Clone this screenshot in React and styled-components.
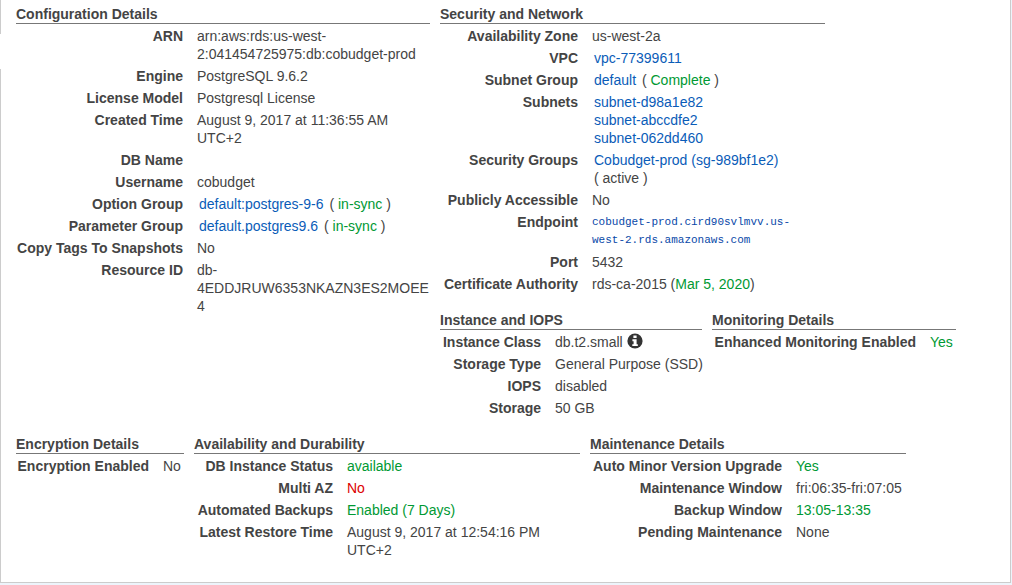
import React from "react";
import styled, { createGlobalStyle } from "styled-components";

const GlobalStyle = createGlobalStyle`
  * { box-sizing: border-box; }
  body {
    margin: 0;
    background: #edf4fb;
    color: #444;
    font: 14px/18px "Liberation Sans", Arial, sans-serif;
  }
`;

const Panel = styled.main`
  position: relative;
  margin-right: 1px;
  padding: 5px 15px 21px;
  background: #fff;
  border: 1px solid #ccc;
  border-top: 0;
`;

const TabNotch = styled.div`
  position: absolute;
  left: -1px;
  top: 34px;
  width: 1px;
  height: 35px;
  background: #fff;
`;

const Stack = styled.div`
  display: flex;
  flex-direction: column;
  gap: 16px;
`;

const Row = styled.div`
  display: flex;
  align-items: flex-start;
  gap: 10px;
`;

const Section = styled.section`
  flex: 0 1 ${(p) => p.$width}px;
  min-width: 0;
`;

const NetworkSlot = styled.div`
  display: flex;
`;

const Title = styled.h2`
  margin: 0 0 1px;
  font-size: 14px;
  line-height: 18px;
  font-weight: bold;
  border-bottom: 1px solid #777;
`;

const Table = styled.table`
  width: 100%;
  table-layout: fixed;
  border-collapse: collapse;
`;

const LabelCol = styled.col`
  width: ${(p) => p.$width}px;
`;

const Label = styled.th`
  padding: 2px 0;
  text-align: right;
  vertical-align: top;
  white-space: nowrap;
`;

const Value = styled.td`
  padding: 2px 0 2px 14px;
  vertical-align: top;
  overflow-wrap: anywhere;
  color: ${(p) => p.$color || "inherit"};
`;

const Link = styled.a`
  margin: 0 2px;
  color: #0a5cb8;
  text-decoration: none;
`;

const Line = styled.div`
  white-space: nowrap;
`;

const Status = styled.span`
  margin: 0 2px;
`;

const Good = styled.span`
  color: #093;
`;

const Endpoint = styled.div`
  font-family: "Liberation Mono", monospace;
  font-size: 11px;
  line-height: 18px;
  color: #0848a8;
`;

const InfoIcon = styled.svg`
  width: 16px;
  height: 16px;
  margin-left: 4px;
  vertical-align: -2px;
`;

const GREEN = "#093";
const RED = "#d00";

function Details({ title, width, labelWidth, rows }) {
  return (
    <Section $width={width}>
      <Title>{title}</Title>
      <Table>
        <colgroup>
          <LabelCol $width={labelWidth} />
          <col />
        </colgroup>
        <tbody>
          {rows.map(([label, value, color]) => (
            <tr key={label}>
              <Label scope="row">{label}</Label>
              <Value $color={color}>{value}</Value>
            </tr>
          ))}
        </tbody>
      </Table>
    </Section>
  );
}

const Info = () => (
  <InfoIcon viewBox="0 0 16 16" role="img" aria-label="Instance class information">
    <circle cx="8" cy="8" r="7.6" fill="#333" />
    <path d="M6.4 2.6h3.2v2.5H6.4zM5.4 6.3h4.2v4.9h1.2v1.9H5.3v-1.9h1.3V8.2H5.4z" fill="#fff" />
  </InfoIcon>
);

const GroupLink = ({ name, status }) => (
  <>
    <Link href="#">{name}</Link> ( <Good>{status}</Good> )
  </>
);

const configuration = [
  ["ARN", "arn:aws:rds:us-west-2:041454725975:db:cobudget-prod"],
  ["Engine", "PostgreSQL 9.6.2"],
  ["License Model", "Postgresql License"],
  ["Created Time", "August 9, 2017 at 11:36:55 AM UTC+2"],
  ["DB Name", ""],
  ["Username", "cobudget"],
  ["Option Group", <GroupLink name="default:postgres-9-6" status="in-sync" />],
  ["Parameter Group", <GroupLink name="default.postgres9.6" status="in-sync" />],
  ["Copy Tags To Snapshots", "No"],
  ["Resource ID", "db-4EDDJRUW6353NKAZN3ES2MOEE4"],
];

const network = [
  ["Availability Zone", "us-west-2a"],
  ["VPC", <Link href="#">vpc-77399611</Link>],
  ["Subnet Group", <GroupLink name="default" status="Complete" />],
  [
    "Subnets",
    ["subnet-d98a1e82", "subnet-abccdfe2", "subnet-062dd460"].map((id) => (
      <Line key={id}>
        <Link href="#">{id}</Link>
      </Line>
    )),
  ],
  [
    "Security Groups",
    <>
      <Line>
        <Link href="#">Cobudget-prod (sg-989bf1e2)</Link>
      </Line>
      <Line>
        <Status>( active )</Status>
      </Line>
    </>,
  ],
  ["Publicly Accessible", "No"],
  [
    "Endpoint",
    <Endpoint>
      <Line>cobudget-prod.cird90svlmvv.us-</Line>
      <Line>west-2.rds.amazonaws.com</Line>
    </Endpoint>,
  ],
  ["Port", "5432"],
  [
    "Certificate Authority",
    <>
      rds-ca-2015 (<Good>Mar 5, 2020</Good>)
    </>,
  ],
];

const instance = [
  [
    "Instance Class",
    <Line>
      db.t2.small
      <Info />
    </Line>,
  ],
  ["Storage Type", <Line>General Purpose (SSD)</Line>],
  ["IOPS", "disabled"],
  ["Storage", "50 GB"],
];

const monitoring = [["Enhanced Monitoring Enabled", "Yes", GREEN]];

const encryption = [["Encryption Enabled", "No"]];

const availability = [
  ["DB Instance Status", "available", GREEN],
  ["Multi AZ", "No", RED],
  ["Automated Backups", "Enabled (7 Days)", GREEN],
  ["Latest Restore Time", "August 9, 2017 at 12:54:16 PM UTC+2"],
];

const maintenance = [
  ["Auto Minor Version Upgrade", "Yes", GREEN],
  ["Maintenance Window", "fri:06:35-fri:07:05"],
  ["Backup Window", "13:05-13:35", GREEN],
  ["Pending Maintenance", "None"],
];

export default function App() {
  return (
    <>
      <GlobalStyle />
      <Panel>
        <TabNotch />
        <Stack>
          <Row>
            <Details title="Configuration Details" width={414} labelWidth={167} rows={configuration} />
            <Stack>
              <NetworkSlot>
                <Details title="Security and Network" width={385} labelWidth={138} rows={network} />
              </NetworkSlot>
              <Row>
                <Details title="Instance and IOPS" width={262} labelWidth={101} rows={instance} />
                <Details title="Monitoring Details" width={244} labelWidth={204} rows={monitoring} />
              </Row>
            </Stack>
          </Row>
          <Row>
            <Details title="Encryption Details" width={168} labelWidth={133} rows={encryption} />
            <Details title="Availability and Durability" width={386} labelWidth={139} rows={availability} />
            <Details title="Maintenance Details" width={316} labelWidth={192} rows={maintenance} />
          </Row>
        </Stack>
      </Panel>
    </>
  );
}
